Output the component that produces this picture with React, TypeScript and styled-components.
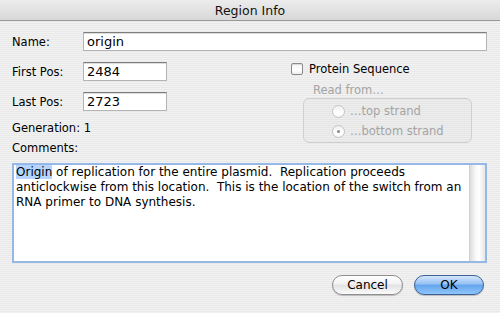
import styled, { createGlobalStyle } from "styled-components";

const GlobalStyle = createGlobalStyle`
  html, body {
    margin: 0;
    padding: 0;
  }
  body {
    width: 500px;
    height: 313px;
    overflow: hidden;
    font-family: "DejaVu Sans", "Liberation Sans", sans-serif;
    color: #000;
  }
`;

const Window = styled.div`
  width: 500px;
  height: 313px;
  display: flex;
  flex-direction: column;
  background: repeating-linear-gradient(
    to bottom,
    #f2f2f2 0px,
    #f2f2f2 1px,
    #e9e9e9 1px,
    #e9e9e9 2px
  );
`;

const TitleBar = styled.div`
  height: 20px;
  flex: none;
  border-bottom: 1px solid #9a9a9a;
  background: linear-gradient(#ececec, #d8d8d8);
  display: flex;
  align-items: center;
  justify-content: center;
  font-size: 12.5px;
  color: #111;
`;

const Body = styled.div`
  padding: 11px 13px 0 12px;
  display: flex;
  flex-direction: column;
  font-size: 11.5px;
`;

const FieldRow = styled.div`
  display: flex;
  align-items: center;
  height: 19px;
`;

const Label = styled.span`
  width: 71px;
  flex: none;
`;

const TextField = styled.div<{ $width?: number }>`
  box-sizing: border-box;
  height: 19px;
  ${(p) => (p.$width ? `width: ${p.$width}px;` : "flex: 1;")}
  background: #fff;
  border: 1px solid #b4b4b4;
  border-top-color: #7e7e7e;
  box-shadow: inset 0 1px 0 #dcdcdc;
  padding: 0 3px;
  font-size: 13px;
  line-height: 17px;
`;

const Middle = styled.div`
  display: flex;
  margin-top: 11px;
`;

const LeftCol = styled.div`
  width: 279px;
  flex: none;
  display: flex;
  flex-direction: column;
  gap: 11px;
`;

const PlainLine = styled.div<{ $top: number }>`
  height: 16px;
  line-height: 16px;
  margin-top: ${(p) => p.$top}px;
`;

const RightCol = styled.div`
  flex: 1;
  display: flex;
  flex-direction: column;
`;

const CheckRow = styled.label`
  display: flex;
  align-items: center;
  gap: 6px;
  height: 13px;
  margin-top: 0px;
  font-size: 11.5px;
`;

const CheckBox = styled.span`
  box-sizing: border-box;
  width: 12px;
  height: 12px;
  border: 1px solid #8a8a8a;
  border-radius: 2px;
  background: linear-gradient(#f6f6f6, #ffffff 60%, #ececec);
  box-shadow: inset 0 1px 1px rgba(0, 0, 0, 0.12);
`;

const Disabled = styled.div`
  color: #a4a4a4;
  height: 16px;
  line-height: 16px;
  margin: 7px 0 0 22px;
`;

const GroupBox = styled.div`
  box-sizing: border-box;
  margin-left: 12px;
  width: 169px;
  height: 45px;
  border: 1px solid #cfcfcf;
  border-radius: 6px;
  background: rgba(0, 0, 0, 0.015);
  padding: 5px 0 0 28px;
  display: flex;
  flex-direction: column;
  gap: 6px;
`;

const RadioRow = styled.div`
  display: flex;
  align-items: center;
  gap: 5px;
  height: 14px;
  color: #a4a4a4;
`;

const Radio = styled.span<{ $on?: boolean }>`
  box-sizing: border-box;
  width: 13px;
  height: 13px;
  border-radius: 50%;
  border: 1px solid #c4c4c4;
  background: linear-gradient(#f0f0f0, #ffffff 70%, #f4f4f4);
  display: flex;
  align-items: center;
  justify-content: center;

  &::after {
    content: "";
    display: ${(p) => (p.$on ? "block" : "none")};
    width: 3px;
    height: 3px;
    border-radius: 50%;
    background: #8a8a8a;
  }
`;

const Comments = styled.div`
  box-sizing: border-box;
  margin-top: 7px;
  height: 100px;
  border: 2px solid #95b8e6;
  background: #fff;
  display: flex;
`;

const CommentText = styled.div`
  flex: 1;
  padding: 0 2px;
  font-size: 12px;
  line-height: 15px;
`;

const Selected = styled.span`
  background: #b5d5ff;
`;

const ScrollTrack = styled.div`
  width: 15px;
  flex: none;
  border-left: 1px solid #cfcfcf;
  background: linear-gradient(to right, #dcdcdc, #f6f6f6 35%, #ffffff 60%, #e6e6e6);
`;

const Buttons = styled.div`
  display: flex;
  justify-content: flex-end;
  gap: 11px;
  margin: 12px 3px 0 0;
`;

const Button = styled.button<{ $primary?: boolean }>`
  box-sizing: border-box;
  height: 20px;
  width: ${(p) => (p.$primary ? 70 : 71)}px;
  border-radius: 10px;
  font-family: "DejaVu Sans", sans-serif;
  font-size: 12px;
  color: #000;
  padding: 0;
  border: 1px solid ${(p) => (p.$primary ? "#3d5f98" : "#8e8e8e")};
  background: ${(p) =>
    p.$primary
      ? "linear-gradient(#d4e6fb, #94c1f4 45%, #63a4ec 50%, #8fc6fb 100%)"
      : "linear-gradient(#ffffff, #f2f2f2 45%, #e2e2e2 50%, #fbfbfb 100%)"};
  box-shadow: 0 1px 1px rgba(0, 0, 0, 0.2);
`;

export default function App() {
  return (
    <Window>
      <GlobalStyle />
      <TitleBar>Region Info</TitleBar>
      <Body>
        <FieldRow>
          <Label>Name:</Label>
          <TextField>origin</TextField>
        </FieldRow>
        <Middle>
          <LeftCol>
            <FieldRow>
              <Label>First Pos:</Label>
              <TextField $width={84}>2484</TextField>
            </FieldRow>
            <FieldRow>
              <Label>Last Pos:</Label>
              <TextField $width={84}>2723</TextField>
            </FieldRow>
            <PlainLine $top={-2}>Generation: 1</PlainLine>
            <PlainLine $top={-7}>Comments:</PlainLine>
          </LeftCol>
          <RightCol>
            <CheckRow>
              <CheckBox />
              Protein Sequence
            </CheckRow>
            <Disabled>Read from…</Disabled>
            <GroupBox>
              <RadioRow>
                <Radio />
                …top strand
              </RadioRow>
              <RadioRow>
                <Radio $on />
                …bottom strand
              </RadioRow>
            </GroupBox>
          </RightCol>
        </Middle>
        <Comments>
          <CommentText>
            <Selected>Origin</Selected> of replication for the entire plasmid.&nbsp; Replication proceeds
            anticlockwise from this location.&nbsp; This is the location of the switch from an RNA
            primer to DNA synthesis.
          </CommentText>
          <ScrollTrack />
        </Comments>
        <Buttons>
          <Button>Cancel</Button>
          <Button $primary>OK</Button>
        </Buttons>
      </Body>
    </Window>
  );
}
